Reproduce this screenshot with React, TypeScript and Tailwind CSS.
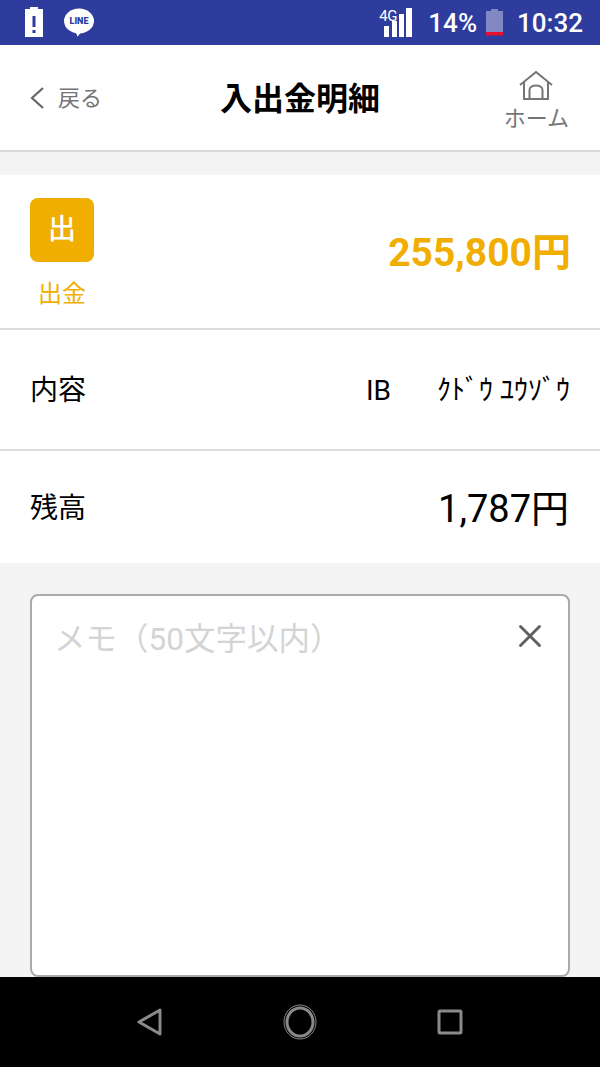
import { X } from 'lucide-react';

function StatusBar() {
  return (
    <div className="flex h-[45px] items-center bg-[#2e3c9e] pl-[24px] pr-[17px] text-white">
      {/* バッテリー警告 */}
      <svg width="20" height="30" viewBox="0 0 20 30" className="mt-[-1px]">
        <path d="M6 0h8v2h5v28H1V2h5z" fill="#fff" />
        <rect x="8.5" y="9" width="3" height="11" fill="#2e3c9e" />
        <rect x="8.5" y="23" width="3" height="3" fill="#2e3c9e" />
      </svg>
      <div className="relative ml-[20px] h-[30px] w-[30px]">
        <svg width="30" height="30" viewBox="0 0 30 30" className="absolute inset-0">
          <ellipse cx="15" cy="13" rx="15" ry="12.5" fill="#fff" />
          <path d="M11 23l4 0 5-2-6 7c-1 1-1 0-1-1z" fill="#fff" />
        </svg>
        <span className="absolute left-0 top-[8px] w-full text-center font-['Roboto',sans-serif] text-[9px] font-black leading-[10px] text-[#2e3c9e]">
          LINE
        </span>
      </div>
      <div className="ml-auto flex items-center">
        <div className="relative h-[32px] w-[34px]">
          <span className="absolute left-0 top-[2px] font-['Roboto',sans-serif] text-[15px] leading-[15px] tracking-[-0.5px]">4G</span>
          <svg width="34" height="32" viewBox="0 0 34 32" className="absolute inset-0">
            <rect x="5" y="19" width="5" height="11" fill="#fff" />
            <rect x="13" y="14" width="5" height="16" fill="#fff" />
            <rect x="20" y="7" width="5" height="23" fill="#fff" />
            <rect x="27" y="1" width="6" height="29" fill="#fff" />
          </svg>
        </div>
        <span className="ml-[15px] font-['Roboto',sans-serif] text-[26px] font-medium leading-none">14%</span>
        <svg width="17" height="28" viewBox="0 0 17 28" className="ml-[9px]">
          <path d="M5 0h7v2h5v24H0V2h5z" fill="#8288c4" />
          <rect x="0" y="23" width="17" height="3.5" fill="#e8112d" />
        </svg>
        <span className="ml-[14px] font-['Roboto',sans-serif] text-[26px] font-medium leading-none">10:32</span>
      </div>
    </div>
  );
}

function Header() {
  return (
    <div className="relative flex h-[107px] items-center justify-between border-b-2 border-[#d9d9d9] bg-white pl-[30px] pr-[31px]">
      <div className="flex items-center text-[#757575]">
        <svg width="14" height="22" viewBox="0 0 14 22" fill="none" stroke="#666" strokeWidth="2.2" className="mt-[1px]">
          <path d="M13 1L2 11l11 10" />
        </svg>
        <span className="ml-[14px] mt-[2px] text-[22px] leading-none">戻る</span>
      </div>
      <h1 className="absolute left-0 top-[32px] w-full text-center text-[32px] font-bold leading-[44px] text-black">
        入出金明細
      </h1>
      <div className="relative flex flex-col items-center pt-[6px] text-[#757575]">
        <svg width="34" height="32" viewBox="0 0 34 32" fill="none" stroke="#757575" strokeWidth="2">
          <path d="M1 15L17 2l16 13" />
          <path d="M5 12v17h24V12" />
          <path d="M10.500 29V20c0-6 13-6 13 0v9" />
        </svg>
        <span className="mt-[4px] text-[22px] leading-[26px]">ホーム</span>
      </div>
    </div>
  );
}

function Summary() {
  return (
    <div className="flex h-[155px] items-start justify-between border-b-2 border-[#dcdcdc] pl-[30px] pr-[29px] pt-[23px]">
      <div className="flex w-[64px] flex-col items-center">
        <div className="flex h-[64px] w-[64px] items-center justify-center rounded-[8px] bg-[#f0ae00] text-[28px] font-medium leading-none text-white">
          出
        </div>
        <span className="mt-[18px] text-[24px] leading-[28px] text-[#f0ae00]">出金</span>
      </div>
      <span className="mt-[31px] text-[39px] font-bold leading-[48px] text-[#f0ae00]">255,800円</span>
    </div>
  );
}

function Memo() {
  return (
    <div className="flex-1 bg-[#f4f4f4] px-[30px] pt-[31px]">
      <div className="flex h-[383px] items-start justify-between rounded-[8px] border-2 border-[#aaaaaa] bg-white pl-[22px] pr-[19px] pt-[24px]">
        <span className="text-[31.500px] leading-[40px] text-[#d4d4d4]">メモ（50文字以内）</span>
        <X size={38} strokeWidth={1.8} className="mt-[-3px] text-[#5f5f5f]" />
      </div>
    </div>
  );
}

function NavBar() {
  return (
    <div className="flex h-[90px] items-center justify-center gap-[120px] bg-black">
      <svg width="26" height="30" viewBox="0 0 26 30" fill="none" stroke="#8a8a8a" strokeWidth="3" strokeLinejoin="round">
        <path d="M23 3v24L2 15z" />
      </svg>
      <svg width="34" height="36" viewBox="0 0 34 36" fill="none" stroke="#8a8a8a">
        <ellipse cx="17" cy="18" rx="16" ry="17" strokeWidth="1" />
        <ellipse cx="17" cy="18" rx="13" ry="14" strokeWidth="3" />
      </svg>
      <svg width="26" height="26" viewBox="0 0 26 26" fill="none" stroke="#8a8a8a" strokeWidth="3" strokeLinejoin="round">
        <rect x="2" y="2" width="22" height="22" rx="1" />
      </svg>
    </div>
  );
}

export default function App() {
  return (
    <div className="flex h-[1067px] w-[600px] flex-col overflow-hidden bg-[#f4f4f4] font-['Roboto','Noto_Sans_CJK_JP',sans-serif]">
      <StatusBar />
      <Header />
      <div className="mt-[23px] bg-white">
        <Summary />
        <div className="flex h-[121px] items-center justify-between border-b-2 border-[#dcdcdc] pl-[30px] pr-[30px] pt-[3px] text-black">
          <span className="text-[28px] leading-none">内容</span>
          <div className="flex items-center gap-[46px] text-[28px] leading-none">
            <span>IB</span>
            <span>ｸﾄﾞｳ ﾕｳｿﾞｳ</span>
          </div>
        </div>
        <div className="flex h-[112px] items-center justify-between pl-[30px] pr-[31px] pt-[4px] text-black">
          <span className="text-[28px] leading-none">残高</span>
          <span className="text-[38px] leading-none">1,787円</span>
        </div>
      </div>
      <Memo />
      <NavBar />
    </div>
  );
}
